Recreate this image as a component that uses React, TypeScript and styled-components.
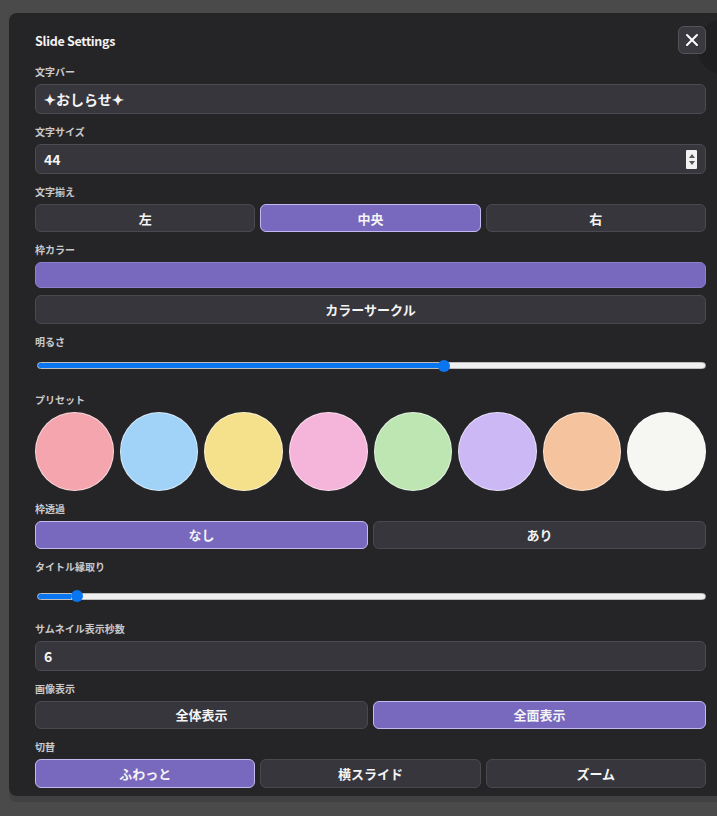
import React from "react";
import styled, { createGlobalStyle } from "styled-components";

const GlobalStyle = createGlobalStyle`
  html, body {
    margin: 0;
    padding: 0;
    background: #4a4a4a;
    overflow: hidden;
    font-family: "Noto Sans CJK JP", "Noto Sans", sans-serif;
  }
  * { box-sizing: border-box; }
`;

const Page = styled.div`
  width: 717px;
  height: 816px;
  padding: 13px 0 0 9px;
  overflow: hidden;
`;

const Panel = styled.section`
  position: relative;
  width: 723px;
  background: #252528;
  border-radius: 8px;
  padding: 13px 26px 8px 26px;
  display: flex;
  flex-direction: column;
  gap: 11px;
  box-shadow: 0 6px 0 rgba(0, 0, 0, 0.12);
`;

const Header = styled.header`
  display: flex;
  align-items: center;
  justify-content: space-between;
  height: 28px;
`;

const Title = styled.h1`
  margin: 0;
  font-size: 12.5px;
  font-weight: 700;
  color: #f2f2f2;
  letter-spacing: -0.3px;
`;

const CloseButton = styled.button`
  position: relative;
  z-index: 2;
  width: 28px;
  height: 28px;
  display: flex;
  align-items: center;
  justify-content: center;
  background: #3a393f;
  border: 1px solid #55545b;
  border-radius: 6px;
  padding: 0;
  color: #fff;
`;

const MenuGhost = styled.div`
  position: absolute;
  top: 6px;
  left: 688px;
  width: 56px;
  height: 56px;
  border-radius: 50%;
  background: #1f1f22;
  z-index: 1;
`;

const MenuLines = styled.svg`
  position: absolute;
  top: 13px;
  left: 20px;
`;

const Field = styled.div<{ $gap?: number }>`
  display: flex;
  flex-direction: column;
  gap: ${(p) => p.$gap ?? 5}px;
`;

const Label = styled.label`
  font-size: 10px;
  line-height: 14px;
  font-weight: 700;
  color: #c9c9cc;
`;

const InputBox = styled.div`
  height: 30px;
  display: flex;
  align-items: center;
  background: #37363c;
  border: 1px solid #4c4b52;
  border-radius: 6px;
  padding: 0 8px;
`;

const TextInput = styled.input`
  flex: 1;
  min-width: 0;
  border: none;
  outline: none;
  background: transparent;
  color: #f4f4f4;
  font-family: inherit;
  font-size: 14px;
  font-weight: 700;
  padding: 0;
`;

const Spinner = styled.div`
  width: 11px;
  height: 19px;
  background: #f1f1f1;
  border-radius: 1px;
  display: flex;
  flex-direction: column;
  align-items: center;
  justify-content: center;
  gap: 3px;
`;

const Tri = styled.span<{ $down?: boolean }>`
  width: 0;
  height: 0;
  border-left: 3px solid transparent;
  border-right: 3px solid transparent;
  ${(p) =>
    p.$down
      ? "border-top: 4px solid #555;"
      : "border-bottom: 4px solid #555;"}
`;

const ButtonRow = styled.div<{ $cols: number }>`
  display: grid;
  grid-template-columns: repeat(${(p) => p.$cols}, 1fr);
  gap: 5px;
`;

const Choice = styled.button<{ $active?: boolean; $h?: number }>`
  height: ${(p) => p.$h ?? 28}px;
  border-radius: 6px;
  border: 1px solid ${(p) => (p.$active ? "#c3b9f0" : "#4a4950")};
  background: ${(p) => (p.$active ? "#7868be" : "#37363c")};
  color: #f4f4f4;
  font-family: inherit;
  font-size: 13px;
  font-weight: 700;
  padding: 0;
`;

const WideChoice = styled(Choice)`
  margin-top: 2px;
`;

const ColorBar = styled.div<{ $color: string }>`
  height: 26px;
  border-radius: 6px;
  background: ${(p) => p.$color};
  border: 1px solid #8d80cf;
`;

const Range = styled.input<{ $fill: number }>`
  -webkit-appearance: none;
  appearance: none;
  display: block;
  width: 100%;
  height: 7px;
  margin: 10px 0;
  border-radius: 4px;
  border: 1px solid #bdbdbd;
  background: linear-gradient(
    to right,
    #0a75f0 0%,
    #0a75f0 ${(p) => p.$fill}%,
    #efefef ${(p) => p.$fill}%,
    #efefef 100%
  );
  outline: none;

  &::-webkit-slider-thumb {
    -webkit-appearance: none;
    appearance: none;
    width: 12px;
    height: 12px;
    border-radius: 50%;
    background: #0a75f0;
    border: none;
  }
`;

const SliderWrap = styled.div<{ $top: number; $bottom: number }>`
  padding: ${(p) => p.$top}px 0 ${(p) => p.$bottom}px 2px;
`;

const Swatches = styled.div`
  display: grid;
  grid-template-columns: repeat(8, 1fr);
  gap: 6px;
`;

const Swatch = styled.button<{ $color: string }>`
  aspect-ratio: 1;
  width: 100%;
  border-radius: 50%;
  background: ${(p) => p.$color};
  border: 1.5px solid rgba(255, 255, 255, 0.55);
  padding: 0;
`;

const presets = [
  "#f4a5ae",
  "#a0d3f7",
  "#f5e08c",
  "#f5b5da",
  "#bde6b3",
  "#cbb8f4",
  "#f5c49e",
  "#f6f6f2",
];

const Slider: React.FC<{ value: number; top?: number; bottom?: number }> = ({
  value,
  top = 0,
  bottom = 4,
}) => (
  <SliderWrap $top={top} $bottom={bottom}>
    <Range type="range" min={0} max={100} defaultValue={value} $fill={value} />
  </SliderWrap>
);

const App: React.FC = () => {
  return (
    <Page>
      <GlobalStyle />
      <Panel>
        <MenuGhost>
          <MenuLines width="20" height="14" viewBox="0 0 20 14">
            <path d="M0 2h20M0 7h20M0 12h20" stroke="#58585e" strokeWidth="1.5" />
          </MenuLines>
        </MenuGhost>
        <Header>
          <Title>Slide Settings</Title>
          <CloseButton aria-label="close">
            <svg width="16" height="16" viewBox="0 0 16 16">
              <path d="M3 3l10 10M13 3L3 13" stroke="#fff" strokeWidth="2" strokeLinecap="round" />
            </svg>
          </CloseButton>
        </Header>

        <Field>
          <Label>文字バー</Label>
          <InputBox>
            <TextInput defaultValue="✦おしらせ✦" />
          </InputBox>
        </Field>

        <Field>
          <Label>文字サイズ</Label>
          <InputBox>
            <TextInput defaultValue="44" />
            <Spinner>
              <Tri />
              <Tri $down />
            </Spinner>
          </InputBox>
        </Field>

        <Field>
          <Label>文字揃え</Label>
          <ButtonRow $cols={3}>
            <Choice>左</Choice>
            <Choice $active>中央</Choice>
            <Choice>右</Choice>
          </ButtonRow>
        </Field>

        <Field>
          <Label>枠カラー</Label>
          <ColorBar $color="#7868be" />
          <WideChoice $h={29}>カラーサークル</WideChoice>
        </Field>

        <Field $gap={0}>
          <Label>明るさ</Label>
          <Slider value={61} top={3} bottom={3} />
        </Field>

        <Field>
          <Label>プリセット</Label>
          <Swatches>
            {presets.map((c) => (
              <Swatch key={c} $color={c} />
            ))}
          </Swatches>
        </Field>

        <Field>
          <Label>枠透過</Label>
          <ButtonRow $cols={2}>
            <Choice $active>なし</Choice>
            <Choice>あり</Choice>
          </ButtonRow>
        </Field>

        <Field $gap={0}>
          <Label>タイトル縁取り</Label>
          <Slider value={5} top={9} bottom={1} />
        </Field>

        <Field>
          <Label>サムネイル表示秒数</Label>
          <InputBox>
            <TextInput defaultValue="6" />
          </InputBox>
        </Field>

        <Field>
          <Label>画像表示</Label>
          <ButtonRow $cols={2}>
            <Choice>全体表示</Choice>
            <Choice $active>全面表示</Choice>
          </ButtonRow>
        </Field>

        <Field>
          <Label>切替</Label>
          <ButtonRow $cols={3}>
            <Choice $active $h={29}>ふわっと</Choice>
            <Choice $h={29}>横スライド</Choice>
            <Choice $h={29}>ズーム</Choice>
          </ButtonRow>
        </Field>
      </Panel>
    </Page>
  );
};

export default App;
